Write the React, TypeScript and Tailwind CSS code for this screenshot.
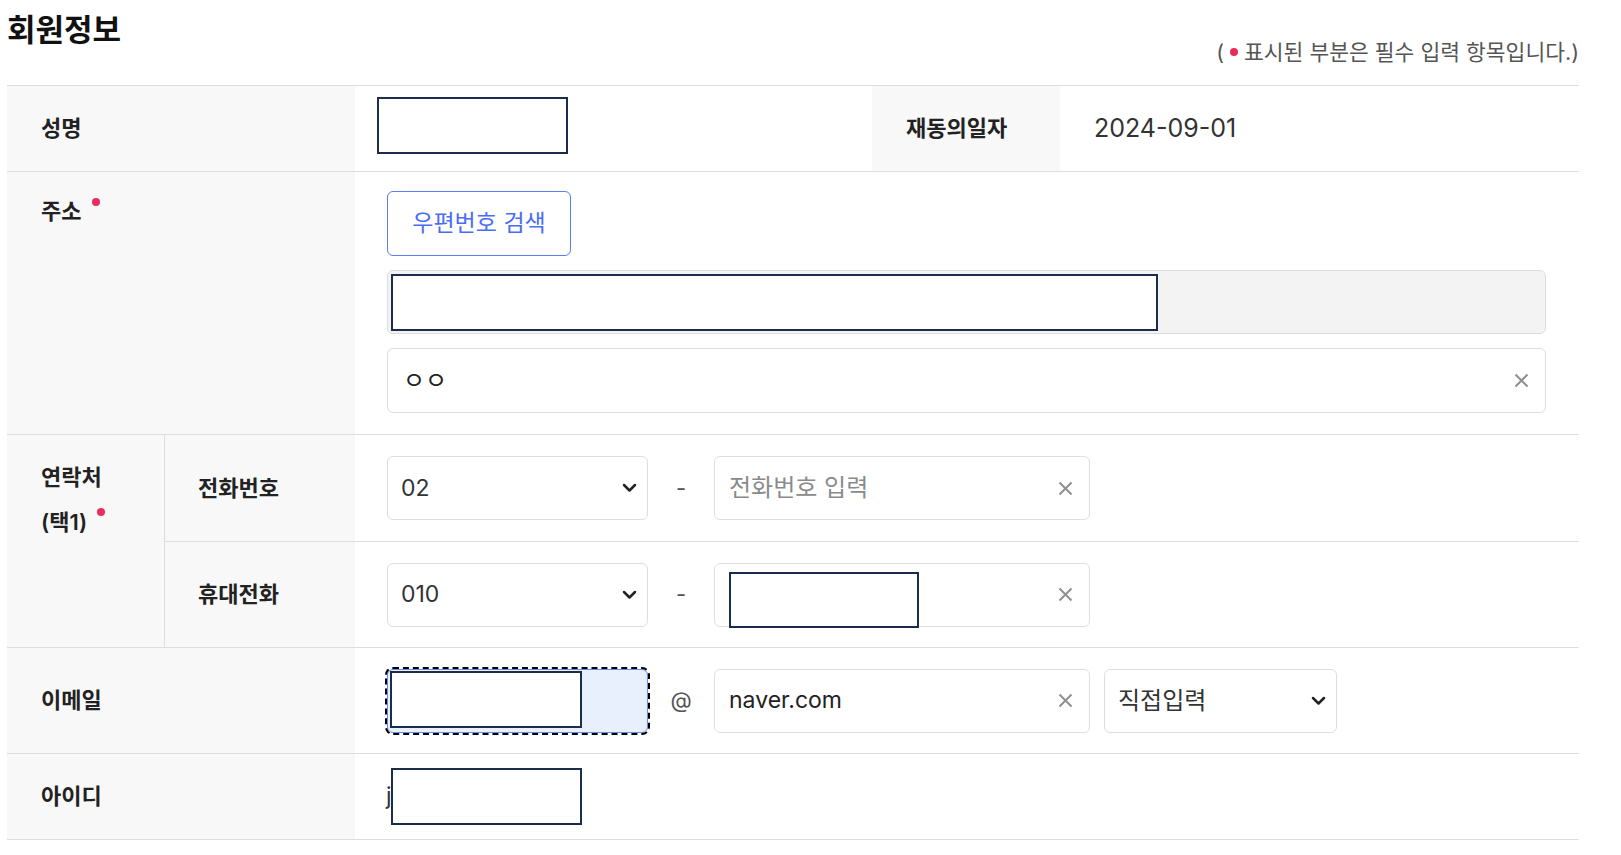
import React from 'react';

const cell = 'bg-[#f8f8f8]';

function Dot({ className = '' }: { className?: string }) {
  return <span className={`inline-block w-[8px] h-[8px] rounded-full bg-[#ec2b5c] ${className}`} />;
}

function Redact({ className = '' }: { className?: string }) {
  return <div className={`border-2 border-[#1b2d4b] bg-white shrink-0 ${className}`} />;
}

function ClearIcon() {
  return (
    <svg width="15" height="15" viewBox="0 0 15 15" className="shrink-0">
      <path d="M1.5 1.5 L13.5 13.5 M13.5 1.5 L1.5 13.5" stroke="#8f8f8f" strokeWidth="2" fill="none" />
    </svg>
  );
}

function Chevron() {
  return (
    <svg width="15" height="10" viewBox="0 0 15 10" className="shrink-0">
      <path d="M2 2 L7.5 7.5 L13 2" stroke="#222" strokeWidth="2.5" fill="none" strokeLinecap="round" strokeLinejoin="round" />
    </svg>
  );
}

function Select({ value, width, ko }: { value: string; width: string; ko?: boolean }) {
  return (
    <div className={`${width} h-[64px] border border-[#dedede] rounded-[6px] bg-white flex items-center justify-between pl-[13px] pr-[10px] ${ko ? 'text-[24px]' : 'text-[23px]'} text-[#333]`}>
      <span>{value}</span>
      <Chevron />
    </div>
  );
}

function Sep({ children }: { children: React.ReactNode }) {
  return <span className="w-[66px] text-center text-[22px] text-[#555]">{children}</span>;
}

export default function App() {
  return (
    <div className="pl-[7px] pr-[42px] bg-white text-[#222] font-['Inter','Noto_Sans_CJK_KR',sans-serif]">
      {/* 제목 */}
      <div className="flex justify-between h-[85px]">
        <h1 className="pt-[10px] text-[31px] leading-[40px] font-bold text-[#111]">회원정보</h1>
        <p className="self-end pb-[19px] text-[21.5px] leading-[28px] text-[#555] flex items-center">
          ( <Dot className="mx-[6px]" />표시된 부분은 필수 입력 항목입니다.)
        </p>
      </div>

      <div className="border-t border-[#dddddd]">
        {/* 성명 / 재동의일자 */}
        <div className="grid grid-cols-[348px_517px_188px_1fr] h-[86px] border-b border-[#dddddd]">
          <div className={`${cell} flex items-center pl-[34px] text-[22px] font-semibold`}>성명</div>
          <div className="flex items-center pl-[22px]">
            <Redact className="w-[191px] h-[57px] mb-[6px]" />
          </div>
          <div className={`${cell} flex items-center pl-[34px] text-[22px] font-semibold`}>재동의일자</div>
          <div className="flex items-center pl-[34px] text-[25px] text-[#333]">2024-09-01</div>
        </div>

        {/* 주소 */}
        <div className="grid grid-cols-[348px_1fr] h-[263px] border-b border-[#dddddd]">
          <div className={`${cell} pl-[34px] pt-[24px] text-[22px] leading-[30px] font-semibold flex items-start`}>
            주소<Dot className="ml-[11px] mt-[2px]" />
          </div>
          <div className="pl-[32px] pr-[33px] pt-[19px] flex flex-col gap-[14px]">
            <button className="w-[184px] h-[65px] border border-[#5b7df5] rounded-[6px] text-[23px] text-[#4a6cf7] bg-white">
              우편번호 검색
            </button>
            <div className="h-[64px] border border-[#dddddd] rounded-[6px] bg-[#f3f3f3] flex items-center pl-[3px]">
              <Redact className="w-[767px] h-[57px]" />
            </div>
            <div className="h-[65px] border border-[#dddddd] rounded-[6px] bg-white flex items-center justify-between pl-[15px] pr-[16px] text-[24px] text-[#222]">
              <span>ㅇㅇ</span>
              <ClearIcon />
            </div>
          </div>
        </div>

        {/* 연락처 */}
        <div className="flex h-[213px] border-b border-[#dddddd]">
          <div className={`${cell} w-[158px] shrink-0 border-r border-[#dddddd] pl-[34px] pt-[20px] text-[22px] leading-[45px] font-semibold`}>
            <div>연락처</div>
            <div className="flex items-start">
              (택1)<Dot className="ml-[10px] mt-[8px]" />
            </div>
          </div>
          <div className="flex-1 flex flex-col">
            <div className="flex h-[107px] border-b border-[#dddddd]">
              <div className={`${cell} w-[190px] flex items-center pl-[33px] text-[22px] font-semibold`}>전화번호</div>
              <div className="flex items-center pl-[32px]">
                <Select value="02" width="w-[261px]" />
                <Sep>-</Sep>
                <div className="w-[376px] h-[64px] border border-[#dedede] rounded-[6px] bg-white flex items-center justify-between pl-[14px] pr-[16px] text-[24px] text-[#8a8a8a]">
                  <span>전화번호 입력</span>
                  <ClearIcon />
                </div>
              </div>
            </div>
            <div className="flex flex-1">
              <div className={`${cell} w-[190px] flex items-center pl-[33px] text-[22px] font-semibold`}>휴대전화</div>
              <div className="flex items-center pl-[32px]">
                <Select value="010" width="w-[261px]" />
                <Sep>-</Sep>
                <div className="w-[376px] h-[64px] border border-[#dedede] rounded-[6px] bg-white flex items-start justify-between pl-[14px] pr-[16px] pt-[8px]">
                  <Redact className="w-[190px] h-[56px]" />
                  <span className="self-center -mt-[8px]"><ClearIcon /></span>
                </div>
              </div>
            </div>
          </div>
        </div>

        {/* 이메일 */}
        <div className="grid grid-cols-[348px_1fr] h-[106px] border-b border-[#dddddd]">
          <div className={`${cell} flex items-center pl-[34px] text-[22px] font-semibold`}>이메일</div>
          <div className="flex items-center pl-[32px]">
            <div className="w-[261px] h-[64px] rounded-[6px] border border-[#6b8af0] bg-[#e8f0fe] outline-2 outline-dashed outline-black flex items-start pl-[2px] pt-[1px]">
              <Redact className="w-[192px] h-[57px]" />
            </div>
            <Sep>@</Sep>
            <div className="w-[376px] h-[64px] border border-[#dedede] rounded-[6px] bg-white flex items-center justify-between pl-[14px] pr-[16px] text-[23px] text-[#222]">
              <span>naver.com</span>
              <ClearIcon />
            </div>
            <div className="ml-[14px]">
              <Select value="직접입력" width="w-[233px]" ko />
            </div>
          </div>
        </div>

        {/* 아이디 */}
        <div className="grid grid-cols-[348px_1fr] h-[86px] border-b border-[#dddddd]">
          <div className={`${cell} flex items-center pl-[34px] text-[22px] font-semibold`}>아이디</div>
          <div className="flex items-center pl-[31px] text-[23px] text-[#333]">
            <span className="relative z-10">j</span>
            <Redact className="w-[191px] h-[57px] -ml-[1px]" />
          </div>
        </div>
      </div>
    </div>
  );
}
